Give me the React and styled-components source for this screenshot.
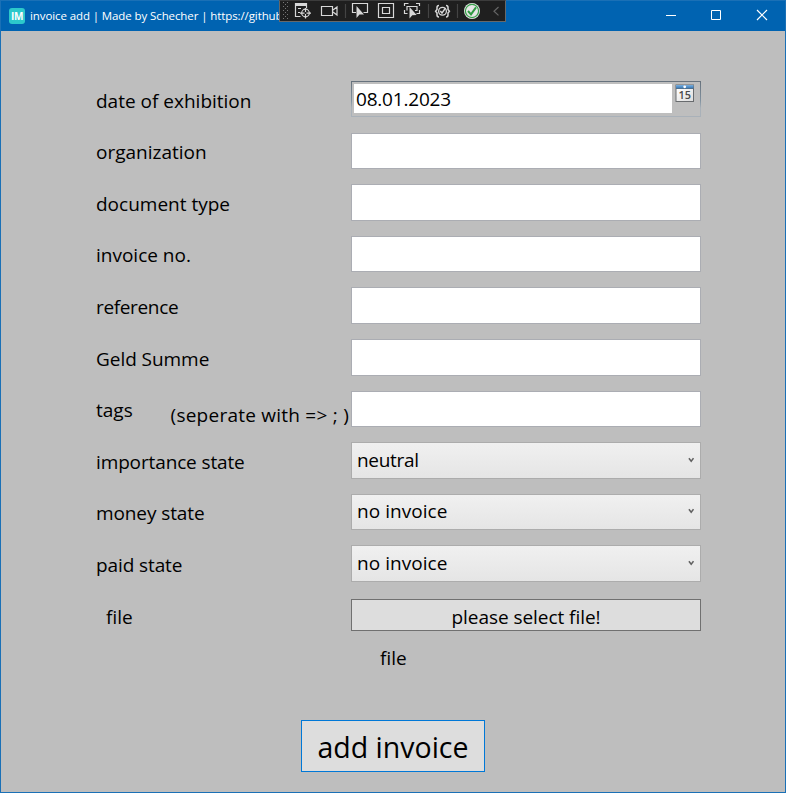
import React from 'react';
import styled, { createGlobalStyle } from 'styled-components';

const Global = createGlobalStyle`
  * { box-sizing: border-box; }
  html, body { margin: 0; padding: 0; overflow: hidden; }
  body { font-family: "Open Sans", "Noto Sans", sans-serif; color: #000; }
  button, input { font: inherit; color: inherit; border-radius: 0; margin: 0; }
`;

const Window = styled.div`
  position: relative;
  width: 786px;
  height: 793px;
  display: flex;
  flex-direction: column;
  background: #bebebe;
  border: 1px solid #1a70b6;
`;

const TitleBar = styled.header`
  height: 30px;
  flex: none;
  display: flex;
  align-items: center;
  background: #0063b1;
  color: #fff;
  padding-left: 8px;
`;

const Logo = styled.div`
  width: 16px;
  height: 16px;
  border-radius: 3px;
  background: #2cc9cb;
  font: 700 10px/16px "Open Sans", sans-serif;
  text-align: center;
  letter-spacing: -0.3px;
`;

const Title = styled.div`
  margin-left: 5px;
  white-space: nowrap;
  font-size: 11.5px;
  line-height: 18px;
  letter-spacing: ${(p) => p.$track}px;
`;

const Controls = styled.div`
  margin-left: auto;
  margin-right: -1px;
  display: flex;
`;

const Control = styled.button`
  width: 46px;
  height: 30px;
  padding: 0;
  border: 0;
  background: none;
  display: flex;
  svg { display: block; }
`;

const DebugBar = styled.div`
  position: absolute;
  left: 278px;
  top: -1px;
  width: 227px;
  height: 22px;
  background: #1f1f1f;
  border: 1px solid #686868;
  border-top-color: #3c3c3c;
  svg { display: block; margin: -1px; }
`;

const Form = styled.main`
  display: grid;
  grid-template-columns: 255px 350px;
  grid-auto-rows: 51.55px;
  padding: 50.25px 0 0 95px;
`;

const Label = styled.label`
  font-size: 19px;
  line-height: 26px;
  padding-top: 6.6px;
  white-space: nowrap;
  letter-spacing: ${(p) => p.$track || 0}px;
`;

const FileLabel = styled(Label)`
  padding-top: 7.6px;
  padding-left: 10px;
`;

const TagLabels = styled.div`
  display: flex;
  justify-content: space-between;
`;

const Hint = styled(Label)`
  padding-top: 11px;
  padding-right: 2px;
`;

const TextField = styled.input`
  width: 350px;
  height: 36.55px;
  padding: 0 5px;
  border: 1px solid #abadb3;
  background: #fff;
  font-size: 19px;
  outline: none;
`;

const DateField = styled.div`
  height: 36px;
  display: flex;
  align-items: flex-start;
  padding: 2px 5px 0 2px;
  border: 1px solid;
  border-image: linear-gradient(#66717c 0%, #8192a0 55%, #a9b1b9 75%, #a9b1b9 100%) 1;
`;

const DateText = styled.div`
  width: 318px;
  height: 29px;
  padding-left: 2px;
  background: #fff;
  font-size: 19px;
  line-height: 31px;
  letter-spacing: ${(p) => p.$track}px;
`;

const CalendarIcon = styled.svg`
  display: block;
  margin-left: 3px;
`;

const Select = styled.button`
  width: 350px;
  height: 36.55px;
  display: flex;
  align-items: center;
  justify-content: space-between;
  padding: 0 6px 1px 5px;
  border: 1px solid #acacac;
  background: linear-gradient(#f0f0f0, #e5e5e5);
  font-size: 19px;
  line-height: 26px;
  letter-spacing: ${(p) => p.$track}px;
`;

const FileButton = styled.button`
  width: 350px;
  height: 32px;
  margin-top: 2px;
  padding: 4px 0 0;
  border: 1px solid #707070;
  background: #ddd;
  font-size: 19px;
  line-height: 26px;
  letter-spacing: ${(p) => p.$track}px;
`;

const FileName = styled.div`
  grid-column: 2;
  padding: 0 0 0 29px;
  margin-top: -3px;
  font-size: 19px;
  line-height: 26px;
`;

const Submit = styled.button`
  width: 184px;
  height: 52px;
  margin: auto 0 20px 300px;
  padding: 2px 0 0;
  border: 1px solid #0078d7;
  background: #ddd;
  font-size: 28.5px;
  line-height: 40px;
`;

const FIELDS = [
  ['organization', 0],
  ['document type', 0],
  ['invoice no.', 0],
  ['reference', -0.35],
  ['Geld Summe', -0.05],
];

const STATES = [
  ['importance state', -0.13, 'neutral', -0.3],
  ['money state', -0.1, 'no invoice', 0.05],
  ['paid state', -0.1, 'no invoice', 0.05],
];

const GRIP = [];
for (let y = 2; y < 20; y += 2) {
  for (let x = y % 4 ? 4 : 6; x < 10; x += 4) GRIP.push([x, y]);
}

function DebugToolbar() {
  return (
    <DebugBar>
      <svg width="227" height="22" viewBox="279 0 227 22" fill="none" stroke="#d8d8d8" strokeWidth="1.2">
        <g fill="#777" stroke="none">
          {GRIP.map(([x, y]) => <rect key={`${x}-${y}`} x={279 + x} y={y} width="1" height="1" />)}
        </g>
        <path d="M295.5 3v13.5h5M295 4.2h12M306.5 3v5M298 8.5h3M298 12.5h2" />
        <path d="M295 3h12v3h-12z" fill="#d8d8d8" stroke="none" />
        <circle cx="305.5" cy="13" r="3.8" />
        <path d="M305.5 8v4M305.5 14v4.5M300 13.2h4.5M306.5 13.2h4.5" />
        <path d="M321.5 6.5h11v9h-11zM333 10l4-3v8l-4-3" />
        <path d="M345.5 4v14M428.5 4v14M457.5 4v14" stroke="#444" />
        <path d="M356 12.5h-3.5v-9h15v9h-4" />
        <path d="M356.5 6v12l3-3.4 4.5-.2z" fill="#d8d8d8" stroke="none" />
        <path d="M378.5 3.5h15v14h-15zM382.5 7.5h7v6h-7z" />
        <path d="M404.5 6V3.5h4M416 3.5h3.5V6M404.5 10v3.5h3M419.5 10v3.5h-3M407 10.5V6.5h10v4h-2" />
        <path d="M409.5 7v11.5l2.8-3.3 4.4-.2z" fill="#d8d8d8" stroke="none" />
        <path d="M439 5.6q-2 0-2 2v2l-1.400 1.700 1.400 1.700v2q0 2 2 2M446 5.600q2 0 2 2v2l1.400 1.700-1.400 1.700v2q0 2-2 2" strokeWidth="1.500" />
        <circle cx="442.500" cy="11.300" r="3.900" strokeWidth="1.300" />
        <path d="M440.300 11l1.700 2 3.500-5" strokeWidth="1.400" />
        <circle cx="472" cy="11" r="8" fill="#e6e6e6" stroke="none" />
        <circle cx="472" cy="11" r="6.6" stroke="#38a04a" strokeWidth="1.2" />
        <path d="M468 11l3 3.3 5-7" stroke="#2f9a42" strokeWidth="2" />
        <path d="M498.5 7l-4.5 4.2 4.5 4.2" stroke="#666" />
      </svg>
    </DebugBar>
  );
}

function Calendar() {
  return (
    <CalendarIcon width="20" height="19" viewBox="0 0 20 19">
      <defs>
        <linearGradient id="calHead" x1="0" y1="0" x2="0" y2="1">
          <stop offset="0" stopColor="#79aede" />
          <stop offset="1" stopColor="#3476b4" />
        </linearGradient>
        <linearGradient id="calPage" x1="0" y1="0" x2="1" y2="1">
          <stop offset="0" stopColor="#fff" />
          <stop offset="1" stopColor="#dcdcdc" />
        </linearGradient>
      </defs>
      <rect x="0.5" y="0.5" width="18.5" height="17.5" fill="#686b6e" />
      <rect x="1.5" y="5" width="16.5" height="12" fill="url(#calPage)" />
      <rect x="1" y="1" width="17.5" height="3.5" fill="url(#calHead)" />
      <circle cx="9.7" cy="2.8" r="1.4" fill="#fff" />
      <text x="9.8" y="15" fontFamily="Open Sans, sans-serif" fontSize="10" fontWeight="600" textAnchor="middle" textLength="12.5" lengthAdjust="spacingAndGlyphs" fill="#484848">15</text>
    </CalendarIcon>
  );
}

function Chevron() {
  return (
    <svg width="6" height="6" viewBox="0 0 6 6" fill="none" stroke="#606060" strokeWidth="1.5">
      <path d="M0.9 1.2l2.3 3 2.300-3" />
    </svg>
  );
}

export default function App() {
  return (
    <>
      <Global />
      <Window>
        <TitleBar>
          <Logo>IM</Logo>
          <Title $track={-0.1}>invoice add | Made by Schecher | https://github</Title>
          <Controls>
            <Control aria-label="Minimize">
              <svg width="46" height="30" stroke="#fff"><path d="M18 14.5h10" /></svg>
            </Control>
            <Control aria-label="Maximize">
              <svg width="46" height="30" stroke="#fff" fill="none"><path d="M17.5 9.5h9v9h-9z" /></svg>
            </Control>
            <Control aria-label="Close">
              <svg width="46" height="30" stroke="#fff" strokeWidth="1.2"><path d="M17 9l10 10M27 9l-10 10" /></svg>
            </Control>
          </Controls>
        </TitleBar>
        <DebugToolbar />
        <Form>
          <Label>date of exhibition</Label>
          <DateField>
            <DateText $track={-0.2}>08.01.2023</DateText>
            <Calendar />
          </DateField>
          {FIELDS.map(([name, track]) => (
            <React.Fragment key={name}>
              <Label $track={track}>{name}</Label>
              <TextField aria-label={name} />
            </React.Fragment>
          ))}
          <TagLabels>
            <Label>tags</Label>
            <Hint as="span" $track={0.24}>(seperate with =&gt; ; )</Hint>
          </TagLabels>
          <TextField aria-label="tags" />
          {STATES.map(([name, track, value, valueTrack]) => (
            <React.Fragment key={name}>
              <Label $track={track}>{name}</Label>
              <Select $track={valueTrack}>{value}<Chevron /></Select>
            </React.Fragment>
          ))}
          <FileLabel>file</FileLabel>
          <FileButton $track={-0.05}>please select file!</FileButton>
          <FileName>file</FileName>
        </Form>
        <Submit>add invoice</Submit>
      </Window>
    </>
  );
}
